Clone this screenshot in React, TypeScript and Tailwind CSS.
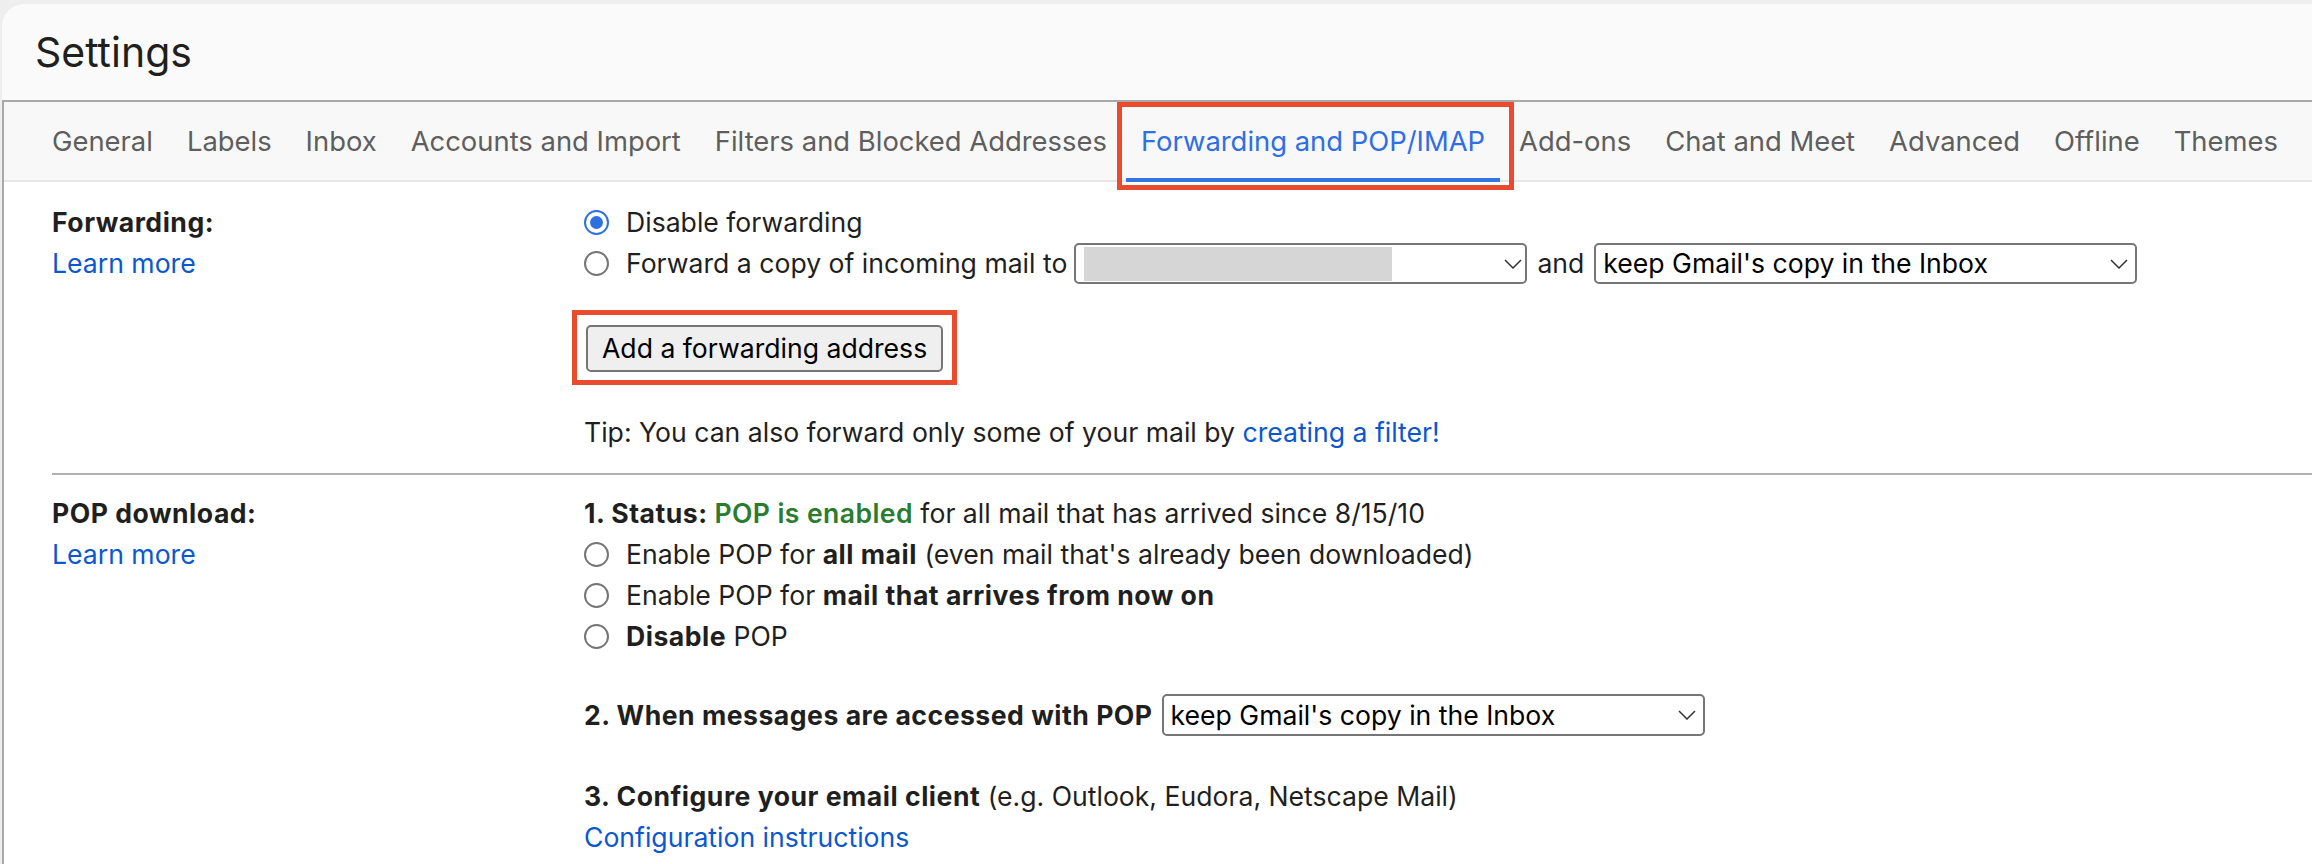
import React from "react";

const tabs = [
  "General",
  "Labels",
  "Inbox",
  "Accounts and Import",
  "Filters and Blocked Addresses",
  "Forwarding and POP/IMAP",
  "Add-ons",
  "Chat and Meet",
  "Advanced",
  "Offline",
  "Themes",
];

const Radio = ({ checked = false }: { checked?: boolean }) => (
  <span
    className={`mr-[17px] flex h-[25px] w-[25px] shrink-0 items-center justify-center rounded-full border-2 bg-white ${
      checked ? "border-[#2f6fe0]" : "border-[#767676]"
    }`}
  >
    {checked && <span className="h-[13px] w-[13px] rounded-full bg-[#2f6fe0]" />}
  </span>
);

const Chevron = () => (
  <svg width="18" height="10" viewBox="0 0 18 10" fill="none" stroke="#333" strokeWidth="1.5">
    <path d="M1 1l8 8 8-8" />
  </svg>
);

const B = ({ children }: { children: React.ReactNode }) => (
  <span className="font-bold tracking-[0.5px]">{children}</span>
);

const Learn = () => <div className="text-[#0b57d0]">Learn more</div>;

const App = () => {
  return (
    <div className="h-[864px] w-[2312px] overflow-hidden bg-[#eeeeee] pl-[2px] pt-[4px] font-['Inter',sans-serif] text-[26.6px] leading-[41px] text-[#1f1f1f]">
      <div className="h-[860px] overflow-hidden rounded-tl-[22px] bg-[#fafafa]">
        <header className="flex h-[96px] items-center pl-[33px] text-[41px] text-[#1f1f1f]">Settings</header>

        <div className="h-[764px] border-l-2 border-t-2 border-[#a9a9a9] bg-white">
          <nav className="flex h-[80px] items-stretch whitespace-nowrap border-b-2 border-[#e6e6e6] bg-[#f8f8f8] pl-[31px] text-[27.4px]">
            {tabs.map((t) =>
              t === "Forwarding and POP/IMAP" ? (
                <div key={t} className="relative flex shrink-0 items-center px-[17px] text-[#2f6ee3]">
                  {t}
                  <span className="absolute inset-x-[2px] bottom-[-2px] h-[4px] bg-[#3574e3]" />
                  <span className="absolute -left-[7px] -right-[12px] top-0 -bottom-[10px] border-[5px] border-[#ea4a2e]" />
                </div>
              ) : (
                <div key={t} className="flex shrink-0 items-center px-[17px] text-[#5e5e5e]">
                  {t}
                </div>
              )
            )}
          </nav>

          {/* Forwarding */}
          <section className="grid grid-cols-[580px_1fr] pb-[20px] pt-[20px]">
            <div className="pl-[48px]">
              <B>Forwarding:</B>
              <Learn />
            </div>
            <div>
              <div className="flex h-[41px] items-center">
                <Radio checked />
                Disable forwarding
              </div>
              <div className="flex h-[41px] items-center whitespace-nowrap">
                <Radio />
                Forward a copy of incoming mail to
                <span className="ml-[7px] flex h-[41px] w-[453px] items-center justify-between rounded-[5px] border-2 border-[#767676] bg-white pl-[8px] pr-[3px]">
                  <span className="h-[34px] w-[308px] bg-[#d6d6d6]" />
                  <Chevron />
                </span>
                <span className="mx-[10px]">and</span>
                <span className="flex h-[41px] w-[543px] items-center justify-between rounded-[5px] border-2 border-[#767676] bg-white pl-[7px] pr-[7px] text-black">
                  keep Gmail's copy in the Inbox
                  <Chevron />
                </span>
              </div>
              <div className="mt-[41px] flex">
                <div className="relative ml-[2px]">
                  <button className="h-[47px] rounded-[5px] border-2 border-[#767676] bg-[#efefef] px-[14px] text-[26.6px] text-black">
                    Add a forwarding address
                  </button>
                  <span className="absolute -left-[14px] -right-[14px] -top-[15px] -bottom-[13px] border-[5px] border-[#ea4a2e]" />
                </div>
              </div>
              <div className="mt-[40px]">
                Tip: You can also forward only some of your mail by{" "}
                <span className="text-[#0b57d0]">creating a filter!</span>
              </div>
            </div>
          </section>

          <div className="ml-[48px] h-[2px] bg-[#b0b0b0]" />

          {/* POP download */}
          <section className="grid grid-cols-[580px_1fr] pt-[18px]">
            <div className="pl-[48px]">
              <B>POP download:</B>
              <Learn />
            </div>
            <div>
              <div>
                <B>1. Status: </B>
                <span className="font-semibold tracking-[0.4px] text-[#2a7d2e]">POP is enabled</span> for all mail that has
                arrived since 8/15/10
              </div>
              <div className="flex h-[41px] items-center">
                <Radio />
                <span>
                  Enable POP for <B>all mail</B> (even mail that's already been downloaded)
                </span>
              </div>
              <div className="flex h-[41px] items-center">
                <Radio />
                <span>
                  Enable POP for <B>mail that arrives from now on</B>
                </span>
              </div>
              <div className="flex h-[41px] items-center">
                <Radio />
                <span>
                  <B>Disable</B> POP
                </span>
              </div>
              <div className="mt-[37px] flex h-[42px] items-center whitespace-nowrap">
                <B>2. When messages are accessed with POP</B>
                <span className="ml-[9px] flex h-[42px] w-[543px] items-center justify-between rounded-[5px] border-2 border-[#767676] bg-white pl-[7px] pr-[7px] text-black">
                  keep Gmail's copy in the Inbox
                  <Chevron />
                </span>
              </div>
              <div className="mt-[40px]">
                <B>3. Configure your email client</B> (e.g. Outlook, Eudora, Netscape Mail)
              </div>
              <div className="text-[#0b57d0]">Configuration instructions</div>
            </div>
          </section>
        </div>
      </div>
    </div>
  );
};

export default App;
